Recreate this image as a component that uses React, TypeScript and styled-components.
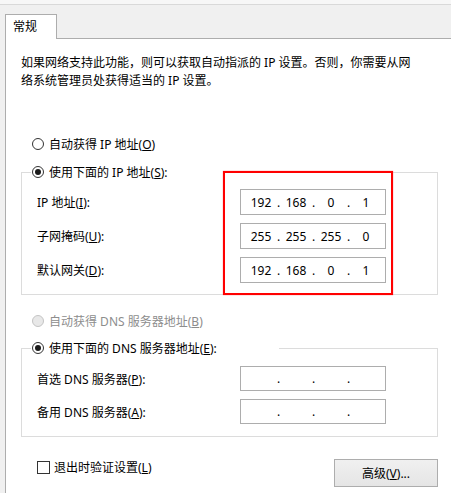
import React from "react";
import styled, { createGlobalStyle } from "styled-components";

const Global = createGlobalStyle`
  html, body { margin: 0; padding: 0; background: #f0f0f0; }
  body { font-family: "Noto Sans", "Noto Sans CJK SC", sans-serif; font-size: 12px; color: #000; }
`;

const Window = styled.div`
  width: 451px;
  height: 493px;
  overflow: hidden;
  background: #f0f0f0;
  display: flex;
  flex-direction: column;
`;

const TopEdge = styled.div`
  height: 4px;
  flex: none;
  background: #f7f7f7;
  border-bottom: 1px solid #d9d9d9;
`;

const TabRow = styled.div`
  height: 33px;
  flex: none;
  display: flex;
  align-items: flex-end;
  padding-left: 5px;
`;

const Tab = styled.div`
  position: relative;
  z-index: 1;
  box-sizing: border-box;
  width: 52px;
  height: 25px;
  margin-bottom: -1px;
  padding: 4px 0 0 7px;
  background: #fff;
  border: 1px solid #adadad;
  border-bottom: none;
  font-size: 12px;
  line-height: 16px;
`;

const Panel = styled.div`
  flex: 1;
  margin-left: 5px;
  background: #fff;
  border-top: 1px solid #adadad;
  border-left: 1px solid #adadad;
  padding-left: 15px;
`;

const Intro = styled.p`
  margin: 15px 0 0;
  line-height: 18px;
  white-space: nowrap;
`;

const RadioRow = styled.label<{ $top: number; $disabled?: boolean }>`
  display: flex;
  align-items: center;
  gap: 5px;
  height: 20px;
  margin-top: ${(p) => p.$top}px;
  padding-left: 11px;
  color: ${(p) => (p.$disabled ? "#8d8d8d" : "#000")};
  white-space: nowrap;
`;

const RadioDot = styled.span<{ $checked?: boolean; $disabled?: boolean }>`
  box-sizing: border-box;
  width: 12px;
  height: 12px;
  border-radius: 50%;
  border: 1px solid ${(p) => (p.$disabled ? "#c4c4c4" : "#333")};
  background: ${(p) => (p.$disabled ? "#e8e8e8" : "#fff")};
  display: flex;
  align-items: center;
  justify-content: center;
  flex: none;
  &::after {
    content: "";
    display: ${(p) => (p.$checked ? "block" : "none")};
    width: 6px;
    height: 6px;
    border-radius: 50%;
    background: #1a1a1a;
  }
`;

const Group = styled.fieldset<{ $top: number; $pt: number; $pb: number; $gap: number }>`
  box-sizing: border-box;
  width: 417px;
  margin: ${(p) => p.$top}px 0 0;
  padding: ${(p) => p.$pt}px 51px ${(p) => p.$pb}px 15px;
  border: 1px solid #dcdcdc;
  min-width: 0;
`;

const Legend = styled.legend`
  box-sizing: border-box;
  width: 248px;
  height: 20px;
  padding: 0;
  margin-left: -6px;
  display: flex;
  align-items: center;
`;

const LegendRadio = styled(RadioRow)`
  margin: 0;
  padding-left: 1px;
`;

const FieldGrid = styled.div<{ $gap: number }>`
  position: relative;
  display: grid;
  grid-template-columns: 1fr 146px;
  row-gap: ${(p) => p.$gap}px;
  align-items: center;
`;

const FieldLabel = styled.span`
  white-space: nowrap;
`;

const IpBox = styled.div<{ $h: number }>`
  box-sizing: border-box;
  height: ${(p) => p.$h}px;
  border: 1px solid #adadad;
  background: #fff;
  display: grid;
  grid-template-columns: 28px 7px 28px 7px 28px 7px 28px;
  padding-left: 6px;
  align-items: center;
  font-size: 12px;
`;

const Octet = styled.span`
  text-align: center;
`;

const Dot = styled.span`
  text-align: center;
`;

const Highlight = styled.div`
  position: absolute;
  left: 186px;
  top: -18px;
  width: 170px;
  height: 124px;
  box-sizing: border-box;
  border: 2px solid #ff0000;
  box-shadow: 0 0 1px rgba(255, 0, 0, 0.6);
  pointer-events: none;
`;

const BottomRow = styled.div`
  width: 417px;
  margin-top: 22px;
  display: flex;
  justify-content: space-between;
  align-items: flex-start;
`;

const CheckRow = styled.label`
  display: flex;
  align-items: center;
  gap: 4px;
  height: 16px;
  padding-left: 16px;
  white-space: nowrap;
`;

const CheckBox = styled.span`
  box-sizing: border-box;
  width: 13px;
  height: 13px;
  border: 1px solid #333;
  background: #fff;
  flex: none;
`;

const Button = styled.button`
  box-sizing: border-box;
  width: 104px;
  height: 28px;
  border: 1px solid #adadad;
  background: linear-gradient(#f0f0f0, #e5e5e5);
  font: inherit;
  font-size: 12px;
  color: #000;
  padding: 0;
  display: flex;
  align-items: center;
  justify-content: center;
`;

const IpField = ({ h, values }: { h: number; values?: string[] }) => {
  const v = values ?? ["", "", "", ""];
  return (
    <IpBox $h={h}>
      <Octet>{v[0]}</Octet>
      <Dot>.</Dot>
      <Octet>{v[1]}</Octet>
      <Dot>.</Dot>
      <Octet>{v[2]}</Octet>
      <Dot>.</Dot>
      <Octet>{v[3]}</Octet>
    </IpBox>
  );
};

export default function App() {
  return (
    <Window>
      <Global />
      <TopEdge />
      <TabRow>
        <Tab>常规</Tab>
      </TabRow>
      <Panel>
        <Intro>
          如果网络支持此功能，则可以获取自动指派的 IP 设置。否则，你需要从网
          <br />
          络系统管理员处获得适当的 IP 设置。
        </Intro>

        <RadioRow $top={44}>
          <RadioDot />
          <span>
            自动获得 IP 地址(<u>O</u>)
          </span>
        </RadioRow>

        <Group $top={8} $pt={7} $pb={11} $gap={8}>
          <Legend>
            <LegendRadio $top={0}>
              <RadioDot $checked />
              <span>
                使用下面的 IP 地址(<u>S</u>):
              </span>
            </LegendRadio>
          </Legend>
          <FieldGrid $gap={8}>
            <FieldLabel>
              IP 地址(<u>I</u>):
            </FieldLabel>
            <IpField h={26} values={["192", "168", "0", "1"]} />
            <FieldLabel>
              子网掩码(<u>U</u>):
            </FieldLabel>
            <IpField h={26} values={["255", "255", "255", "0"]} />
            <FieldLabel>
              默认网关(<u>D</u>):
            </FieldLabel>
            <IpField h={26} values={["192", "168", "0", "1"]} />
            <Highlight />
          </FieldGrid>
        </Group>

        <RadioRow $top={16} $disabled>
          <RadioDot $disabled />
          <span>
            自动获得 DNS 服务器地址(<u>B</u>)
          </span>
        </RadioRow>

        <Group $top={7} $pt={8} $pb={12} $gap={8}>
          <Legend>
            <LegendRadio $top={0}>
              <RadioDot $checked />
              <span>
                使用下面的 DNS 服务器地址(<u>E</u>):
              </span>
            </LegendRadio>
          </Legend>
          <FieldGrid $gap={8}>
            <FieldLabel>
              首选 DNS 服务器(<u>P</u>):
            </FieldLabel>
            <IpField h={25} />
            <FieldLabel>
              备用 DNS 服务器(<u>A</u>):
            </FieldLabel>
            <IpField h={25} />
          </FieldGrid>
        </Group>

        <BottomRow>
          <CheckRow>
            <CheckBox />
            <span>
              退出时验证设置(<u>L</u>)
            </span>
          </CheckRow>
          <Button>
            高级(<u>V</u>)...
          </Button>
        </BottomRow>
      </Panel>
    </Window>
  );
}
